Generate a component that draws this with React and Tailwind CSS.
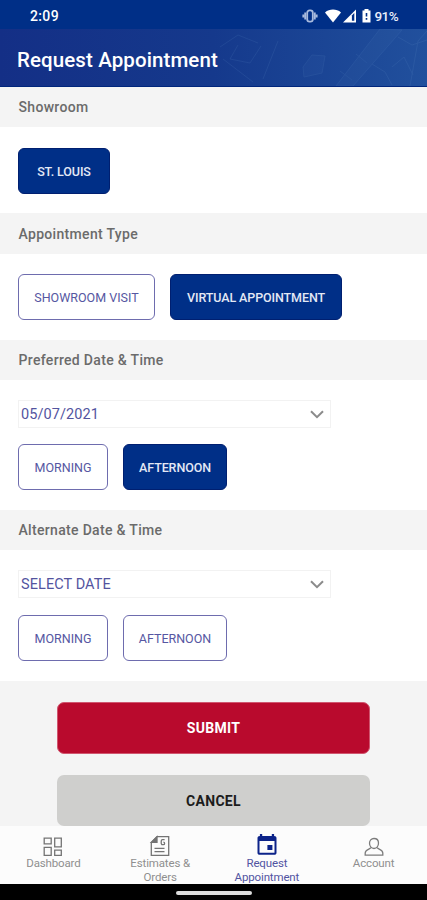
import clsx from 'clsx';

function StatusBar() {
  return (
    <div className="flex h-[29px] items-center bg-[#002f87] pt-[3px] pr-[29px] pl-[30px] text-white">
      <span className="pt-px text-[14px] font-medium tracking-[0.35px]">2:09</span>
      <div className="ml-auto flex items-center">
        {/* Vibrate */}
        <svg width="16" height="14" viewBox="0 0 16 14" fill="none" stroke="#a9bbde" strokeWidth="1.8">
          <rect x="5.2" y="1.4" width="5.6" height="11.2" rx="2.4" />
          <path d="M3.2 3.6v6.8M12.8 3.6v6.8M1.3 5.6v2.8M14.7 5.6v2.8" />
        </svg>
        {/* Wifi */}
        <svg className="ml-[7px]" width="16" height="14" viewBox="0 0 16 14" fill="#fff">
          <path d="M0 3.4C4.6-.4 11.4-.4 16 3.4L8 13.6Z" />
        </svg>
        {/* Signal */}
        <svg className="ml-[2px]" width="13" height="14" viewBox="0 0 13 14">
          <path d="M0 13.4 13 .6V13.4Z" fill="#fff" />
          <path d="M8.9 6.5 11.3 4V11.8H8.9Z" fill="#002f87" />
        </svg>
        {/* Battery */}
        <svg className="ml-[6px]" width="9" height="14" viewBox="0 0 9 14">
          <path d="M2.5 0h4v1.4H8.5V13.6H.5V1.4h2Z" fill="#fff" />
          <path d="M4.5 4v3.6M4.5 9v1.8" stroke="#002f87" strokeWidth="1.6" />
        </svg>
        <span className="ml-[4px] pt-px text-[13.5px] leading-none font-medium tracking-[-0.6px] text-[#e9eefa]">91%</span>
      </div>
    </div>
  );
}

function Header() {
  return (
    <header className="relative flex h-[58px] items-center overflow-hidden border-b border-[#00267c] bg-linear-to-r from-[#142f86] via-[#15398c] to-[#21509d] pt-[5px] pl-[17px]">
      <svg className="absolute inset-0" width="427" height="58" viewBox="0 0 427 58" fill="none" stroke="#6d9bd0">
        <g opacity=".13">
          <path d="M336 57 380 0 402 1 353 57Z" fill="#6d9bd0" fillOpacity=".4" />
          <path d="M340 42 352 51M356 25 367 34" />
          <path d="M220 18 238 6 258 14M223 30l30 23M238 16l-8 14 20 4 11-17M263 50l15-38" />
          <path d="M303 38l9-12 13 1-3 17-18 4Z" fill="#6d9bd0" fillOpacity=".4" />
          <path d="M392 38l12-10 9 18M410 57l8-45 9-10M372 35l13 8 7 13M398 8l14 8 15-5" />
        </g>
      </svg>
      <h1 className="relative text-[20.5px] font-medium tracking-[0.1px] whitespace-nowrap text-white">Request Appointment</h1>
    </header>
  );
}

function SectionTitle({ className, children }) {
  return (
    <h2 className={clsx('flex items-center bg-[#f4f4f4] pt-px pl-[18.5px] text-[14px] font-medium tracking-[0.32px] text-[#6b6b6b]', className)}>
      {children}
    </h2>
  );
}

function Choice({ active, className, children }) {
  return (
    <button
      className={clsx(
        'h-[46px] rounded-[6px] border pt-[2px] text-[12.5px] whitespace-nowrap',
        active ? 'border-[#001f70] bg-[#002f87] font-medium tracking-[-0.1px] text-[#e3e8f5]' : 'border-[#6e6cae] bg-white text-[#5657a2]',
        className
      )}
    >
      {children}
    </button>
  );
}

function DateField({ children }) {
  return (
    <div className="flex h-[28px] w-[313px] items-center border border-[#f2f2f2] pt-px pl-[2px] text-[14.5px] tracking-[0.08px] text-[#53549f]">
      {children}
      <svg className="mr-[6px] ml-auto" width="14" height="9" viewBox="0 0 14 9" fill="none" stroke="#8b8b8b" strokeWidth="2">
        <path d="M1 1.2 7 7.2 13 1.2" />
      </svg>
    </div>
  );
}

function NavItem({ icon, active, children }) {
  return (
    <a
      className={clsx(
        'flex flex-1 flex-col items-center pt-[8px] text-center text-[11.5px] leading-[13.5px] tracking-[-0.15px]',
        active ? 'text-[#5254a2]' : 'text-[#8f8f8f]'
      )}
    >
      {icon}
      <span className="mt-px whitespace-nowrap">{children}</span>
    </a>
  );
}

const DashboardIcon = (
  <svg width="22" height="22" viewBox="0 0 22 22" fill="none" stroke="#747474" strokeWidth="1.3">
    <path d="M2.2 4.1h7v5.8h-7ZM12.7 4.1h6.6v8.8h-6.6ZM2.2 13.3h7v8h-7ZM12.7 16.2h6.6v5.1h-6.6Z" />
  </svg>
);

const EstimatesIcon = (
  <svg width="22" height="22" viewBox="0 0 22 22" fill="none" stroke="#747474" strokeWidth="1.3">
    <path d="M8 2.7h11.7v18.6H2.3V8.4Z" />
    <path d="M8 2.7v5.7H2.3Z" fill="#747474" />
    <path d="M5.5 14.4h10M5.5 17.7h10" />
    <path d="M15.6 5.7h-2.2c-1.6 0-1.6 5 0 5h1c1.6 0 1.6-2.6 0-2.6" />
  </svg>
);

const RequestIcon = (
  <svg width="22" height="22" viewBox="0 0 22 22">
    <path
      fillRule="evenodd"
      d="M3.9 0h2.3v2h9.6V0h2.3v2c1.5 0 2.4.8 2.4 2.1v14.6c0 1.3-.9 2.1-2.2 2.1H3.7c-1.3 0-2.2-.8-2.2-2.1V4.1C1.5 2.8 2.4 2 3.9 2ZM3.5 7v11.8h15V7ZM11.4 11h5v5h-5Z"
      fill="#0c2389"
    />
  </svg>
);

const AccountIcon = (
  <svg width="22" height="22" viewBox="0 0 22 22" fill="none" stroke="#7c7c7c" strokeWidth="1.3">
    <path d="M11 4.5c2.8 0 4.5 2 4.5 4.6 0 3-1.8 5.4-4.5 5.4s-4.5-2.4-4.5-5.4c0-2.6 1.7-4.6 4.5-4.6Z" />
    <path d="M7.9 13.7c-1 1.6-5.7 1.7-5.7 5.4v2h17.6v-2c0-3.7-4.7-3.8-5.7-5.4" />
  </svg>
);

export default function App() {
  return (
    <div className="flex h-[900px] w-[427px] flex-col overflow-hidden bg-white font-['Roboto',sans-serif]">
      <StatusBar />
      <Header />

      <SectionTitle className="h-[40px]">Showroom</SectionTitle>
      <section className="h-[86px] pt-[21px] pl-[18px]">
        <Choice active className="w-[92px]">ST. LOUIS</Choice>
      </section>

      <SectionTitle className="h-[41px]">Appointment Type</SectionTitle>
      <section className="flex h-[86px] gap-[15px] pt-[20px] pl-[18px]">
        <Choice className="w-[137px]">SHOWROOM VISIT</Choice>
        <Choice active className="w-[172px]">VIRTUAL APPOINTMENT</Choice>
      </section>

      <SectionTitle className="h-[40px]">Preferred Date &amp; Time</SectionTitle>
      <section className="h-[130px] pt-[20px] pl-[18px]">
        <DateField>05/07/2021</DateField>
        <div className="mt-[16px] flex gap-[15px]">
          <Choice className="w-[90px]">MORNING</Choice>
          <Choice active className="w-[104px]">AFTERNOON</Choice>
        </div>
      </section>

      <SectionTitle className="h-[40px] pt-[2px]">Alternate Date &amp; Time</SectionTitle>
      <section className="h-[131px] pt-[20px] pl-[18px]">
        <DateField>SELECT DATE</DateField>
        <div className="mt-[17px] flex gap-[15px]">
          <Choice className="w-[90px]">MORNING</Choice>
          <Choice className="w-[104px]">AFTERNOON</Choice>
        </div>
      </section>

      {/* Actions */}
      <section className="flex h-[145px] flex-col gap-[21px] bg-[#f4f4f4] pt-[21px] pl-[57px]">
        <button className="h-[52px] w-[313px] shrink-0 rounded-[7px] border border-[#d0566f] bg-[#b90a2d] pt-px text-[14px] font-bold tracking-[0.3px] text-white">
          SUBMIT
        </button>
        <button className="h-[51px] w-[313px] shrink-0 rounded-[7px] bg-[#cfcfcd] pt-px text-[14px] font-bold tracking-[0.3px] text-[#1c1c1c]">
          CANCEL
        </button>
      </section>

      {/* Bottom navigation */}
      <nav className="flex h-[58px] shrink-0 bg-[#fcfcfc]">
        <NavItem icon={DashboardIcon}>Dashboard</NavItem>
        <NavItem icon={EstimatesIcon}>Estimates &amp;<br />Orders</NavItem>
        <NavItem icon={RequestIcon} active>Request<br />Appointment</NavItem>
        <NavItem icon={AccountIcon}>Account</NavItem>
      </nav>
      <div className="flex h-[16px] shrink-0 justify-center bg-black pt-[7px]">
        <div className="h-[4px] w-[76px] rounded-full bg-[#dcdcdc]" />
      </div>
    </div>
  );
}
